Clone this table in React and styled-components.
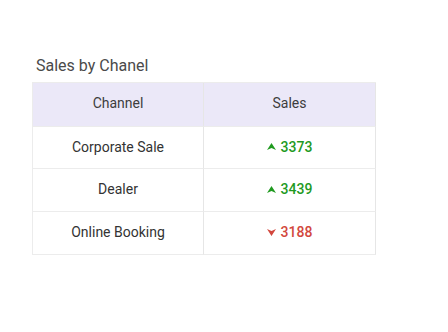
import React from "react";
import styled, { createGlobalStyle } from "styled-components";

const Global = createGlobalStyle`
  html, body { margin: 0; padding: 0; background: #ffffff; }
  body { font-family: Roboto, "Liberation Sans", sans-serif; }
`;

const Page = styled.div`
  padding: 55px 0 0 32px;
  width: 344px;
`;

const Title = styled.div`
  font-size: 16px;
  color: #4a4a4a;
  padding-left: 4px;
  line-height: 22px;
  margin-bottom: 5px;
`;

const Table = styled.div`
  display: grid;
  grid-template-columns: 171px 172px;
  grid-template-rows: 44px 42px 43px 43px;
  border: 1px solid #ececec;
  border-right: none;
  border-bottom: none;
`;

const Cell = styled.div`
  display: flex;
  align-items: center;
  justify-content: center;
  padding-bottom: ${(p) => (p.$head ? "4px" : "2px")};
  font-size: 14px;
  color: ${(p) => (p.$head ? "#3d3d3d" : "#333333")};
  background: ${(p) => (p.$head ? "#ebe8f8" : "#ffffff")};
  border-right: 1px solid #e6e6e6;
  border-bottom: 1px solid #ececec;
`;

const Value = styled.span`
  display: inline-flex;
  align-items: center;
  gap: 5px;
  font-weight: 500;
  color: ${(p) => (p.$up ? "#1f9a1f" : "#d2473d")};
`;

const Arrow = ({ up }) => (
  <svg width="9" height="7" viewBox="0 0 9 7">
    {up ? (
      <path d="M4.5 0 L9 7 L4.5 5 L0 7 Z" fill="currentColor" />
    ) : (
      <path d="M4.5 7 L9 0 L4.5 2 L0 0 Z" fill="currentColor" />
    )}
  </svg>
);

const rows = [
  { name: "Corporate Sale", value: 3373, up: true },
  { name: "Dealer", value: 3439, up: true },
  { name: "Online Booking", value: 3188, up: false },
];

export default function App() {
  return (
    <>
      <Global />
      <Page>
        <Title>Sales by Chanel</Title>
        <Table>
          <Cell $head>Channel</Cell>
          <Cell $head>Sales</Cell>
          {rows.map((r) => (
            <React.Fragment key={r.name}>
              <Cell>{r.name}</Cell>
              <Cell>
                <Value $up={r.up}>
                  <Arrow up={r.up} />
                  {r.value}
                </Value>
              </Cell>
            </React.Fragment>
          ))}
        </Table>
      </Page>
    </>
  );
}
